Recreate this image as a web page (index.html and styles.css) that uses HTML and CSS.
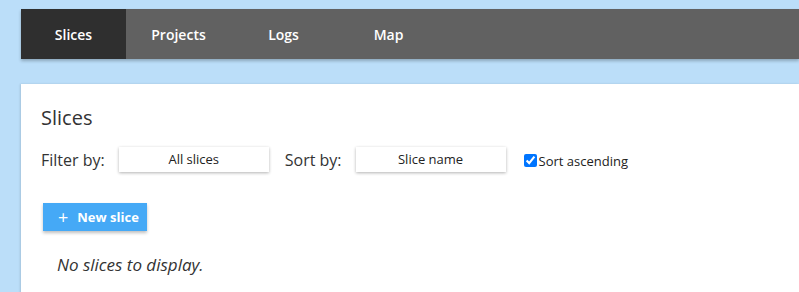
FILE: index.html
```html
<!DOCTYPE html>
<html lang="en">
<head>
    <meta charset="UTF-8">
    <title>Slices</title>
    <link rel="stylesheet" href="styles.css">
</head>
<body>
    <div class="nav">
        <a class="nav-item active" href="#">Slices</a>
        <a class="nav-item" href="#">Projects</a>
        <a class="nav-item" href="#">Logs</a>
        <a class="nav-item" href="#">Map</a>
    </div>

    <div class="card">
        <h2>Slices</h2>
        <div class="controls">
            <label class="control-label">Filter by:</label>
            <div class="select-box">All slices</div>
            <label class="control-label">Sort by:</label>
            <div class="select-box">Slice name</div>
            <label class="check">
                <input type="checkbox" checked>
                Sort ascending
            </label>
        </div>
        <button class="new-btn"><span class="plus">+</span>New slice</button>
        <p class="empty">No slices to display.</p>
    </div>
</body>
</html>
```

FILE: styles.css
```css
* {
    margin: 0;
    padding: 0;
    box-sizing: border-box;
}

body {
    font-family: 'Open Sans', sans-serif;
    background-color: #bbdef9;
    color: #333;
    padding: 9px 0 0 21px;
    overflow: hidden;
}

.nav {
    display: flex;
    height: 50px;
    background: #616161;
    box-shadow: 0 2px 3px rgba(0, 0, 0, 0.25);
}

.nav-item {
    width: 105px;
    display: flex;
    align-items: center;
    justify-content: center;
    color: #fff;
    text-decoration: none;
    font-size: 14px;
    font-weight: 600;
}

.nav-item.active {
    background: #2f2f2f;
}

.card {
    margin-top: 25px;
    background: #fff;
    padding: 20px 20px 20px;
    height: 300px;
    box-shadow: -1px 0 2px rgba(0, 0, 0, 0.12);
}

.card h2 {
    font-size: 20px;
    font-weight: 400;
    color: #333;
    line-height: 28px;
}

.controls {
    display: flex;
    align-items: center;
    margin-top: 15px;
}

.control-label {
    font-size: 16px;
    color: #333;
    margin-right: 14px;
}

.select-box {
    width: 150px;
    height: 25px;
    line-height: 25px;
    text-align: center;
    font-size: 13px;
    color: #222;
    background: #fff;
    box-shadow: 0 1px 3px rgba(0, 0, 0, 0.3);
    margin-right: 16px;
}

.check {
    display: flex;
    align-items: center;
    font-size: 13px;
    color: #222;
    margin-left: 2px;
    margin-top: 2px;
}

.check input {
    width: 13px;
    height: 13px;
    margin-right: 2px;
}

.new-btn {
    display: flex;
    align-items: center;
    margin: 31px 0 0 2px;
    width: 104px;
    height: 28px;
    padding-left: 15px;
    background: #45a9f6;
    color: #fff;
    border: none;
    font-family: 'Open Sans', sans-serif;
    font-size: 13px;
    font-weight: 700;
    box-shadow: 0 2px 3px rgba(0, 0, 0, 0.25);
}

.plus {
    font-size: 18px;
    font-weight: 400;
    margin-right: 9px;
    line-height: 1;
}

.empty {
    font-style: italic;
    font-size: 17px;
    margin: 22px 0 0 16px;
    color: #333;
}
```
